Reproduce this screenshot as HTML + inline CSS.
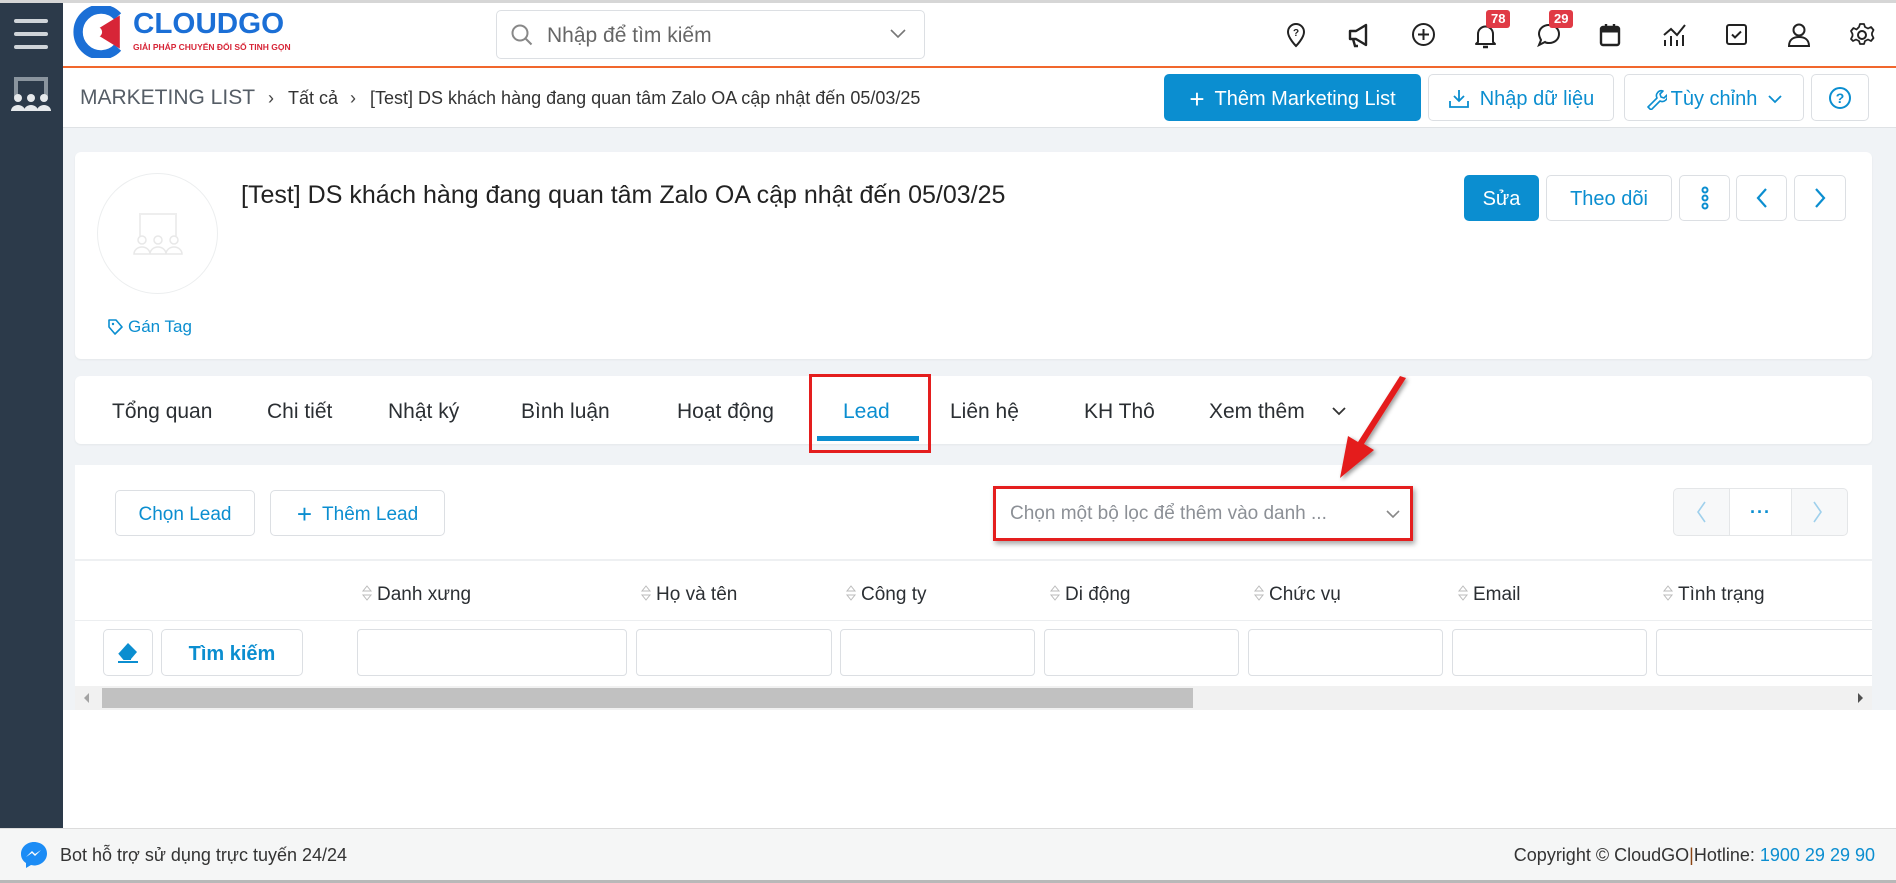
<!DOCTYPE html>
<html><head><meta charset="utf-8">
<style>
*{box-sizing:border-box;margin:0;padding:0}
body{width:1896px;height:883px;position:relative;overflow:hidden;font-family:"Liberation Sans","Noto Sans CJK SC",sans-serif;background:#fff;color:#333}
.a{position:absolute}
.btn{position:absolute;border:1px solid #dcdfe3;border-radius:5px;background:#fff;color:#0b8ed0;display:flex;align-items:center;justify-content:center;font-size:20px;padding-top:3px}
.tab{position:absolute;top:400px;font-size:21px;color:#2b2f33}
.th{position:absolute;top:584px;font-size:19px;color:#2b2f33;white-space:nowrap}
.th svg{vertical-align:-2px;margin-right:4px}
.inp{position:absolute;top:629px;height:47px;border:1px solid #dcdfe3;border-radius:4px;background:#fff}
.ic{position:absolute;top:22px}
.badge{position:absolute;top:10px;height:18px;background:#e03a45;color:#fff;font-size:13px;font-weight:bold;border-radius:3px;padding:0 5px;line-height:18px}
</style></head><body>
<div class="a" style="left:0;top:0;width:1896px;height:3px;background:#d6d6d6"></div>
<div class="a" style="left:0;top:3px;width:63px;height:825px;background:#2c3a4a"></div>
<div class="a" style="left:14px;top:19px;width:34px;height:4px;background:#cfd4d9;border-radius:2px"></div>
<div class="a" style="left:14px;top:32px;width:34px;height:4px;background:#cfd4d9;border-radius:2px"></div>
<div class="a" style="left:14px;top:45px;width:34px;height:4px;background:#cfd4d9;border-radius:2px"></div>
<svg class="a" style="left:8px;top:75px" width="46" height="42" viewBox="0 0 46 42"><path d="M8 22V4h30v18" stroke="#8a949e" stroke-width="4" fill="none"/><g fill="#e6e9ec"><circle cx="10" cy="23" r="4"/><circle cx="23" cy="23" r="4"/><circle cx="36" cy="23" r="4"/><path d="M3 36a7 6 0 0 1 14 0zM16 36a7 6 0 0 1 14 0zM29 36a7 6 0 0 1 14 0z"/></g></svg>
<div class="a" style="left:63px;top:3px;width:1833px;height:63px;background:#fff"></div>
<div class="a" style="left:63px;top:66px;width:1833px;height:2px;background:#f1672d"></div>
<svg class="a" style="left:70px;top:6px" width="58" height="52" viewBox="0 0 52 50"><path d="M44 10A22 22 0 1 0 44 40" stroke="#1b6fd6" stroke-width="9" fill="none"/><path d="M20 25l26-16v32z" fill="#d72537"/><circle cx="24" cy="25" r="5" fill="#fff"/></svg>
<div class="a" style="left:133px;top:8px;font-size:29px;font-weight:bold;color:#1b6fd6;transform:scaleX(1.02);transform-origin:left">CLOUDGO</div>
<div class="a" style="left:133px;top:42px;font-size:8.5px;font-weight:bold;color:#d72537">GIẢI PHÁP CHUYỂN ĐỔI SỐ TINH GỌN</div>
<div class="a" style="left:496px;top:10px;width:429px;height:49px;border:1px solid #dcdfe3;border-radius:5px;background:#fff"></div>
<svg class="a" style="left:510px;top:23px" width="24" height="24" viewBox="0 0 24 24"><circle cx="10" cy="10" r="7.5" stroke="#888" stroke-width="2" fill="none"/><path d="M15.5 15.5l6 6" stroke="#888" stroke-width="2"/></svg>
<div class="a" style="left:547px;top:24px;font-size:21px;color:#666">Nhập để tìm kiếm</div>
<svg class="a" style="left:889px;top:28px" width="18" height="12" viewBox="0 0 18 12"><path d="M2 2l7 7 7-7" stroke="#777" stroke-width="1.6" fill="none"/></svg>
<svg class="ic" style="left:1284px" width="24" height="26" viewBox="0 0 24 26"><path d="M12 24s-8-8-8-14a8 8 0 0 1 16 0c0 6-8 14-8 14z" stroke="#222" stroke-width="2" fill="none"/><text x="12" y="14" font-size="10" text-anchor="middle" font-family="Liberation Sans" font-weight="bold" fill="#222">?</text></svg>
<svg class="ic" style="left:1347px" width="26" height="26" viewBox="0 0 26 26"><path d="M3 9h6l10-6v20L9 17H3z" stroke="#222" stroke-width="2.4" fill="none" stroke-linejoin="round"/><path d="M6 17l2 7h3" stroke="#222" stroke-width="2.4" fill="none"/></svg>
<svg class="ic" style="left:1411px" width="25" height="25" viewBox="0 0 25 25"><circle cx="12.5" cy="12.5" r="10.5" stroke="#222" stroke-width="2" fill="none"/><path d="M12.5 7v11M7 12.5h11" stroke="#222" stroke-width="2"/></svg>
<svg class="ic" style="left:1473px" width="25" height="28" viewBox="0 0 25 28"><path d="M5 20V12a7.5 7.5 0 0 1 15 0v8l2 2H3z" stroke="#222" stroke-width="2" fill="none" stroke-linejoin="round"/><path d="M10 25h5" stroke="#222" stroke-width="2.5"/></svg>
<svg class="ic" style="left:1536px" width="26" height="26" viewBox="0 0 26 26"><path d="M13 3c6 0 10 4 10 9s-4 9-10 9c-2 0-3 0-4-1l-6 3 2-5c-1-2-2-4-2-6 0-5 4-9 10-9z" stroke="#222" stroke-width="2" fill="none"/></svg>
<svg class="ic" style="left:1598px" width="24" height="26" viewBox="0 0 24 26"><rect x="3" y="5" width="18" height="18" rx="2" stroke="#222" stroke-width="2.4" fill="none"/><path d="M3 8h18" stroke="#222" stroke-width="5"/><path d="M8 2v5M16 2v5" stroke="#222" stroke-width="2.4"/></svg>
<svg class="ic" style="left:1661px" width="28" height="26" viewBox="0 0 28 26"><path d="M3 13l7-6 6 6 8-10" stroke="#222" stroke-width="2" fill="none"/><path d="M4 24v-6M10 24v-10M16 24v-6M22 24v-11" stroke="#222" stroke-width="2"/></svg>
<svg class="ic" style="left:1724px" width="25" height="25" viewBox="0 0 25 25"><rect x="3" y="3" width="19" height="19" rx="2" stroke="#222" stroke-width="2" fill="none"/><path d="M8 12.5l3 3 6-6" stroke="#222" stroke-width="2" fill="none"/></svg>
<svg class="ic" style="left:1787px" width="24" height="26" viewBox="0 0 24 26"><circle cx="12" cy="8" r="5.5" stroke="#222" stroke-width="2" fill="none"/><path d="M2 24c0-6 4-9 10-9s10 3 10 9z" stroke="#222" stroke-width="2" fill="none"/></svg>
<svg class="ic" style="left:1849px" width="26" height="26" viewBox="0 0 26 26"><circle cx="13" cy="13" r="4" stroke="#222" stroke-width="2" fill="none"/><path d="M11 2h4l1 3 3 1.5 3-1.5 2.5 3-1.5 3 0 2 1.5 3-2.5 3-3-1.5-3 1.5-1 3h-4l-1-3-3-1.5-3 1.5L2 17l1.5-3v-2L2 9l2.5-3 3 1.5L10 5z" stroke="#222" stroke-width="1.8" fill="none" stroke-linejoin="round"/></svg>
<div class="badge" style="left:1486px">78</div>
<div class="badge" style="left:1549px">29</div>
<div class="a" style="left:63px;top:68px;width:1833px;height:60px;background:#fff;border-bottom:1px solid #dfe2e5"></div>
<div class="a" style="left:80px;top:86px;font-size:21px;color:#555d66">MARKETING LIST</div>
<div class="a" style="left:268px;top:88px;font-size:18px;color:#444">›</div>
<div class="a" style="left:288px;top:88px;font-size:18px;color:#333">Tất cả</div>
<div class="a" style="left:350px;top:88px;font-size:18px;color:#444">›</div>
<div class="a" style="left:370px;top:88px;font-size:18px;color:#333">[Test] DS khách hàng đang quan tâm Zalo OA cập nhật đến 05/03/25</div>
<div class="btn" style="left:1164px;top:74px;width:257px;height:47px;background:#0b8ed0;border-color:#0b8ed0;color:#fff"><span style="font-size:26px;margin-right:10px;font-weight:300">+</span>Thêm Marketing List</div>
<div class="btn" style="left:1428px;top:74px;width:186px;height:47px"><svg width="22" height="22" viewBox="0 0 22 22" style="margin-right:10px"><path d="M11 2v11M6 8l5 5 5-5M2 13v6h18v-6" stroke="#0b8ed0" stroke-width="1.8" fill="none"/></svg>Nhập dữ liệu</div>
<div class="btn" style="left:1624px;top:74px;width:180px;height:47px"><svg width="22" height="22" viewBox="0 0 22 22" style="margin-right:4px"><path d="M3 19l9-9a5 5 0 0 1 6-7l-3 3 1 3 3 1 3-3a5 5 0 0 1-7 6l-9 9z" stroke="#0b8ed0" stroke-width="1.6" fill="none" stroke-linejoin="round"/></svg>Tùy chỉnh<svg width="16" height="10" viewBox="0 0 16 10" style="margin-left:10px"><path d="M2 2l6 6 6-6" stroke="#0b8ed0" stroke-width="1.8" fill="none"/></svg></div>
<div class="btn" style="left:1811px;top:74px;width:58px;height:47px;padding-top:0"><svg width="24" height="24" viewBox="0 0 24 24"><circle cx="12" cy="12" r="10" stroke="#0b8ed0" stroke-width="2" fill="none"/><text x="12" y="17" font-size="14" font-weight="bold" text-anchor="middle" font-family="Liberation Sans" fill="#0b8ed0">?</text></svg></div>
<div class="a" style="left:63px;top:128px;width:1833px;height:582px;background:#f0f3f6"></div>
<div class="a" style="left:75px;top:152px;width:1797px;height:207px;background:#fff;border-radius:6px;box-shadow:0 1px 2px rgba(0,0,0,.05)"></div>
<div class="a" style="left:97px;top:173px;width:121px;height:121px;border:1px solid #eceeef;border-radius:50%"></div>
<svg class="a" style="left:132px;top:210px" width="52" height="48" viewBox="0 0 52 48"><path d="M8 26V4h36v22" stroke="#eeeeee" stroke-width="2" fill="none"/><g stroke="#e8e8e8" stroke-width="1.5" fill="#fff"><circle cx="10" cy="30" r="4"/><circle cx="26" cy="30" r="4"/><circle cx="42" cy="30" r="4"/><path d="M2 44a8 7 0 0 1 16 0zM18 44a8 7 0 0 1 16 0zM34 44a8 7 0 0 1 16 0z"/></g></svg>
<svg class="a" style="left:107px;top:318px" width="16" height="18" viewBox="0 0 16 18"><path d="M2 2h7l6 7-7 7-6-7z" stroke="#0b8ed0" stroke-width="1.6" fill="none" stroke-linejoin="round"/><circle cx="6" cy="6" r="1.2" fill="#0b8ed0"/></svg>
<div class="a" style="left:128px;top:317px;font-size:17px;color:#0b8ed0">Gán Tag</div>
<div class="a" style="left:241px;top:181px;font-size:25px;color:#222">[Test] DS khách hàng đang quan tâm Zalo OA cập nhật đến 05/03/25</div>
<div class="btn" style="left:1464px;top:175px;width:75px;height:46px;background:#0b8ed0;border-color:#0b8ed0;color:#fff">Sửa</div>
<div class="btn" style="left:1546px;top:175px;width:126px;height:46px">Theo dõi</div>
<div class="btn" style="left:1679px;top:175px;width:51px;height:46px;padding-top:0"><svg width="10" height="24" viewBox="0 0 10 24"><g stroke="#0b8ed0" stroke-width="2" fill="none"><circle cx="5" cy="4" r="2.5"/><circle cx="5" cy="12" r="2.5"/><circle cx="5" cy="20" r="2.5"/></g></svg></div>
<div class="btn" style="left:1736px;top:175px;width:51px;height:46px;padding-top:0"><svg width="14" height="22" viewBox="0 0 14 22"><path d="M11 2L3 11l8 9" stroke="#0b8ed0" stroke-width="2.2" fill="none"/></svg></div>
<div class="btn" style="left:1794px;top:175px;width:52px;height:46px;padding-top:0"><svg width="14" height="22" viewBox="0 0 14 22"><path d="M3 2l8 9-8 9" stroke="#0b8ed0" stroke-width="2.2" fill="none"/></svg></div>
<div class="a" style="left:75px;top:376px;width:1797px;height:68px;background:#fff;border-radius:6px;box-shadow:0 1px 2px rgba(0,0,0,.05)"></div>
<div class="tab" style="left:112px">Tổng quan</div>
<div class="tab" style="left:267px">Chi tiết</div>
<div class="tab" style="left:388px">Nhật ký</div>
<div class="tab" style="left:521px">Bình luận</div>
<div class="tab" style="left:677px">Hoạt động</div>
<div class="tab" style="left:843px;color:#0b8ed0">Lead</div>
<div class="tab" style="left:950px">Liên hệ</div>
<div class="tab" style="left:1084px">KH Thô</div>
<div class="tab" style="left:1209px">Xem thêm</div>
<svg class="a" style="left:1331px;top:406px" width="16" height="10" viewBox="0 0 16 10"><path d="M2 2l6 6 6-6" stroke="#333" stroke-width="1.8" fill="none"/></svg>
<div class="a" style="left:817px;top:436px;width:102px;height:5px;background:#0b8ed0"></div>
<div class="a" style="left:809px;top:374px;width:122px;height:79px;border:3px solid #e41e1e"></div>
<div class="a" style="left:75px;top:465px;width:1797px;height:245px;background:#fff"></div>
<div class="btn" style="left:115px;top:490px;width:140px;height:46px;font-size:19px">Chọn Lead</div>
<div class="btn" style="left:270px;top:490px;width:175px;height:46px;font-size:19px"><span style="font-size:26px;margin-right:10px;font-weight:300">+</span>Thêm Lead</div>
<div class="a" style="left:993px;top:486px;width:420px;height:55px;border:3px solid #e41e1e;box-shadow:2px 3px 5px rgba(0,0,0,.35);background:#fff"></div>
<div class="a" style="left:1010px;top:503px;font-size:19px;color:#8c9096">Chọn một bộ lọc để thêm vào danh ...</div>
<svg class="a" style="left:1385px;top:509px" width="16" height="10" viewBox="0 0 16 10"><path d="M2 2l6 6 6-6" stroke="#888" stroke-width="1.6" fill="none"/></svg>
<div class="a" style="left:1673px;top:488px;width:175px;height:48px;border:1px solid #e4e6e8;border-radius:5px;background:#f7f8f9"></div>
<div class="a" style="left:1729px;top:489px;width:63px;height:46px;background:#fff;border-left:1px solid #e4e6e8;border-right:1px solid #e4e6e8"></div>
<svg class="a" style="left:1694px;top:500px" width="14" height="24" viewBox="0 0 14 24"><path d="M11 2L4 12l7 10" stroke="#9fd0ec" stroke-width="1.6" fill="none"/></svg>
<svg class="a" style="left:1811px;top:500px" width="14" height="24" viewBox="0 0 14 24"><path d="M3 2l7 10-7 10" stroke="#9fd0ec" stroke-width="1.6" fill="none"/></svg>
<div class="a" style="left:1750px;top:502px;font-size:18px;color:#0b8ed0;font-weight:bold;letter-spacing:1px">···</div>
<svg class="a" style="left:1320px;top:372px" width="100" height="112" viewBox="0 0 100 112"><defs><filter id="s"><feDropShadow dx="2" dy="2" stdDeviation="2" flood-opacity=".4"/></filter></defs><path d="M86 6L44 72l10 6-34 28 8-42 10 6L80 4z" fill="#e41e1e" filter="url(#s)"/></svg>
<div class="a" style="left:75px;top:559px;width:1797px;height:2px;background:#eef0f2"></div>
<div class="th" style="left:361px"><svg width="12" height="18" viewBox="0 0 12 18"><path d="M6 2l4 5H2zM6 16l4-5H2z" stroke="#bbb" fill="none"/></svg>Danh xưng</div>
<div class="th" style="left:640px"><svg width="12" height="18" viewBox="0 0 12 18"><path d="M6 2l4 5H2zM6 16l4-5H2z" stroke="#bbb" fill="none"/></svg>Họ và tên</div>
<div class="th" style="left:845px"><svg width="12" height="18" viewBox="0 0 12 18"><path d="M6 2l4 5H2zM6 16l4-5H2z" stroke="#bbb" fill="none"/></svg>Công ty</div>
<div class="th" style="left:1049px"><svg width="12" height="18" viewBox="0 0 12 18"><path d="M6 2l4 5H2zM6 16l4-5H2z" stroke="#bbb" fill="none"/></svg>Di động</div>
<div class="th" style="left:1253px"><svg width="12" height="18" viewBox="0 0 12 18"><path d="M6 2l4 5H2zM6 16l4-5H2z" stroke="#bbb" fill="none"/></svg>Chức vụ</div>
<div class="th" style="left:1457px"><svg width="12" height="18" viewBox="0 0 12 18"><path d="M6 2l4 5H2zM6 16l4-5H2z" stroke="#bbb" fill="none"/></svg>Email</div>
<div class="th" style="left:1662px"><svg width="12" height="18" viewBox="0 0 12 18"><path d="M6 2l4 5H2zM6 16l4-5H2z" stroke="#bbb" fill="none"/></svg>Tình trạng</div>
<div class="a" style="left:75px;top:620px;width:1797px;height:1px;background:#eceef0"></div>
<div class="btn" style="left:103px;top:629px;width:50px;height:47px;padding-top:0"><svg width="26" height="24" viewBox="0 0 26 24"><path d="M13 2l9 9-6 7H9l-5-6z" fill="#0b8ed0"/><path d="M4 12l5 6h7M3 21h20" stroke="#0b8ed0" stroke-width="2" fill="none"/></svg></div>
<div class="btn" style="left:161px;top:629px;width:142px;height:47px;font-size:20px;font-weight:bold">Tìm kiếm</div>
<div class="inp" style="left:357px;width:270px"></div>
<div class="inp" style="left:636px;width:196px"></div>
<div class="inp" style="left:840px;width:195px"></div>
<div class="inp" style="left:1044px;width:195px"></div>
<div class="inp" style="left:1248px;width:195px"></div>
<div class="inp" style="left:1452px;width:195px"></div>
<div class="inp" style="left:1656px;width:230px"></div>
<div class="a" style="left:1872px;top:465px;width:24px;height:245px;background:#f0f3f6"></div>
<div class="a" style="left:75px;top:686px;width:1797px;height:24px;background:#f1f1f1"></div>
<div class="a" style="left:102px;top:688px;width:1091px;height:20px;background:#c1c1c1"></div>
<svg class="a" style="left:83px;top:692px" width="8" height="12" viewBox="0 0 8 12"><path d="M6 1L1 6l5 5z" fill="#a3a3a3"/></svg>
<svg class="a" style="left:1856px;top:692px" width="8" height="12" viewBox="0 0 8 12"><path d="M2 1l5 5-5 5z" fill="#505050"/></svg>
<div class="a" style="left:0;top:828px;width:1896px;height:52px;background:#f5f6f6;border-top:1px solid #dcdcdc"></div>
<div class="a" style="left:0;top:880px;width:1896px;height:3px;background:#b8b8b8"></div>
<svg class="a" style="left:19px;top:840px" width="30" height="30" viewBox="0 0 30 30"><path d="M15 2C8 2 2 7 2 14c0 4 2 7 5 9v5l5-3c1 0 2 .5 3 .5 7 0 13-5 13-12S22 2 15 2z" fill="#1c8cf5"/><path d="M7 17l6-6 3 3 6-4-6 6-3-3z" fill="#fff"/></svg>
<div class="a" style="left:60px;top:845px;font-size:18px;color:#333">Bot hỗ trợ sử dụng trực tuyến 24/24</div>
<div class="a" style="right:21px;top:845px;font-size:18px;color:#333">Copyright © CloudGO<span style="color:#8b4513">|</span>Hotline: <span style="color:#0b8ed0">1900 29 29 90</span></div>
</body></html>
